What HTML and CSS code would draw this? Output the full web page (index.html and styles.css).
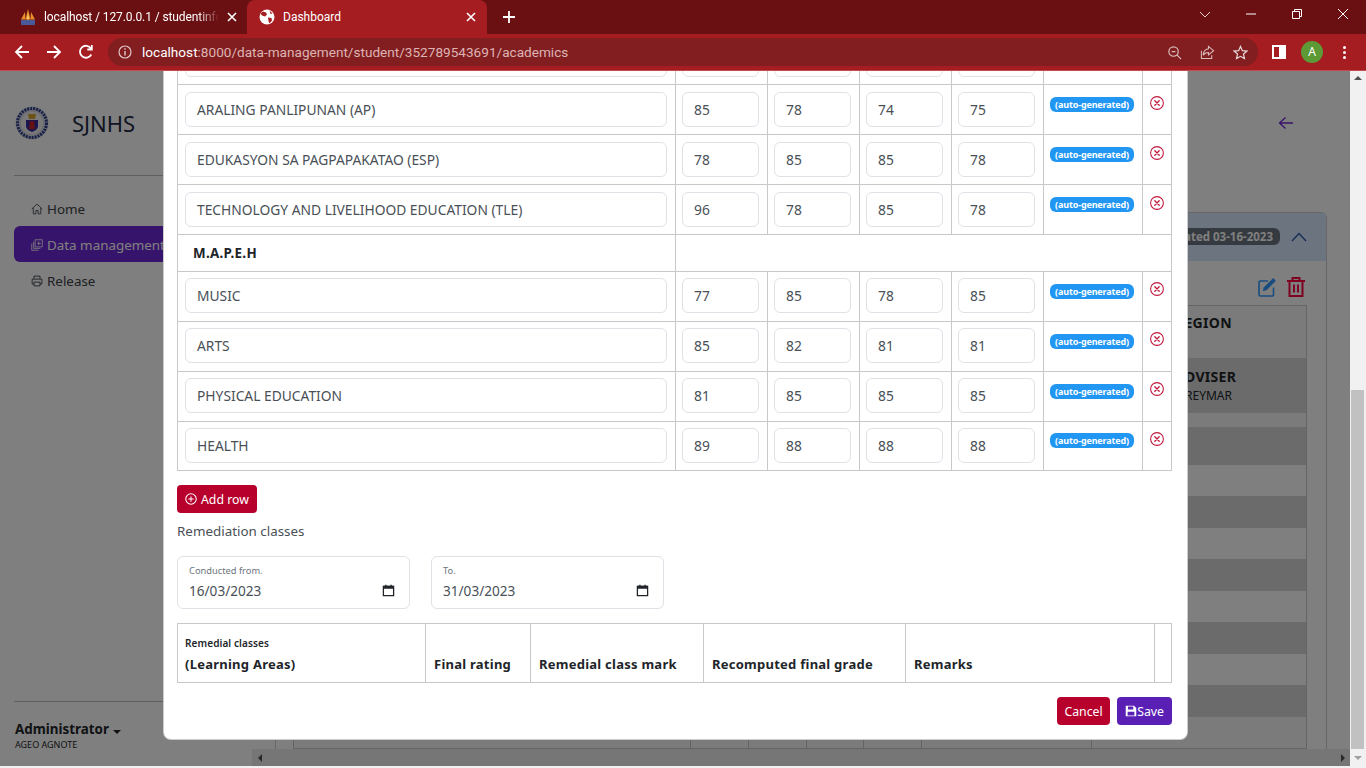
FILE: index.html
```html
<!DOCTYPE html>
<html lang="en">

<head>
    <meta charset="UTF-8" />
    <title>Dashboard</title>
    <link rel="stylesheet" href="styles.css">
</head>

<body>
    <svg class="icon-defs" width="0" height="0">
        <symbol id="i-x" viewBox="0 0 16 16">
            <circle cx="8" cy="8" r="7.3" fill="none" stroke="currentColor" stroke-width="1.2" />
            <path d="M5.5 5.5l5 5m0-5l-5 5" fill="none" stroke="currentColor" stroke-width="1.5" stroke-linecap="round" />
        </symbol>
        <symbol id="i-close" viewBox="0 0 10 10">
            <path d="M1 1l8 8m0-8l-8 8" fill="none" stroke="currentColor" stroke-width="1.6" />
        </symbol>
        <symbol id="i-cal" viewBox="0 0 14 14">
            <path d="M1.5 2.5h11v10h-11z" fill="none" stroke="currentColor" stroke-width="1.4" />
            <path d="M1.5 2h11v3h-11zM3.5 .8h1.4v2h-1.4zM9.1 .8h1.4v2h-1.4z" fill="currentColor" />
        </symbol>
    </svg>

    <!-- browser -->
    <div class="tabstrip">
        <div class="tab">
            <svg class="favicon" viewBox="0 0 16 16">
                <path d="M1 10.500L5 3l.5 7.500zM5.500 10.500L8 0l2.500 10.500zM10.500 10.500L11 3l4 7.500z" fill="#e8902a" />
                <path d="M7 10.500L8 4l1 6.500z" fill="#f7d774" />
                <rect x="1" y="11" width="14" height="5" fill="#4a5a98" />
            </svg>
            <span class="tab-title tab-title-fade">localhost / 127.0.0.1 / studentinfo</span>
            <svg class="tab-close"><use href="#i-close" /></svg>
        </div>
        <div class="tab tab-active">
            <svg class="favicon" viewBox="0 0 16 16">
                <circle cx="8" cy="8" r="7.5" fill="#fff" />
                <path d="M4 2.500l3 1 1 2-2 2-3-1-1.500-2zM9 8.500l3.500 .5 .5 2.500-2.500 3-1-2.500zM10.500 1.500l3 3-2 .5z" fill="#a51d20" />
            </svg>
            <span class="tab-title">Dashboard</span>
            <svg class="tab-close"><use href="#i-close" /></svg>
        </div>
        <svg class="new-tab" viewBox="0 0 12 12"><path d="M6 0v12M0 6h12" stroke="#fff" stroke-width="1.8" /></svg>
        <div class="win-controls">
            <svg viewBox="0 0 12 12"><path d="M1 4l5 5 5-5" fill="none" stroke="#e8d0d0" /></svg>
            <svg viewBox="0 0 12 12"><path d="M1 6h10" stroke="#fff" /></svg>
            <svg viewBox="0 0 12 12"><path d="M1.500 3.500h7v7h-7zM3.500 3.500v-2h7v7h-2" fill="none" stroke="#fff" /></svg>
            <svg viewBox="0 0 12 12"><path d="M1 1l10 10m0-10l-10 10" stroke="#fff" /></svg>
        </div>
    </div>

    <div class="toolbar">
        <svg class="nav-icon" viewBox="0 0 16 16"><path d="M15 8H2m6-6L2 8l6 6" fill="none" stroke="#fff" stroke-width="1.8" /></svg>
        <svg class="nav-icon" viewBox="0 0 16 16"><path d="M1 8h13M8 2l6 6-6 6" fill="none" stroke="#fff" stroke-width="1.8" /></svg>
        <svg class="nav-icon" viewBox="0 0 16 16"><path d="M13.300 10.500A6 6 0 1 1 13 4.500M13.800 1v4.500H9.300" fill="none" stroke="#fff" stroke-width="1.800" /></svg>
        <div class="omnibox">
            <svg class="omni-info" viewBox="0 0 14 14">
                <circle cx="7" cy="7" r="6" fill="none" stroke="#e0c8c8" stroke-width="1.2" />
                <path d="M7 6v4.500M7 3.300v1.500" stroke="#e0c8c8" stroke-width="1.400" />
            </svg>
            <span class="url"><b>localhost</b>:8000/data-management/student/352789543691/academics</span>
            <div class="omni-actions">
                <svg viewBox="0 0 16 16"><circle cx="7" cy="7" r="5" fill="none" stroke="#d8bcbc" stroke-width="1.300" /><path d="M5 7h4M10.500 10.500L15 15" stroke="#d8bcbc" stroke-width="1.300" /></svg>
                <svg viewBox="0 0 16 16"><path d="M9 1.500l5.500 4.500L9 10.500V8C6 8 4.500 9 3.500 11 3.500 7 5.500 4.500 9 4zM1.500 6v8.500h11V11" fill="none" stroke="#d8bcbc" stroke-width="1.100" /></svg>
                <svg viewBox="0 0 16 16"><path d="M8 1.500l2 4.500 4.800 .5-3.600 3.200 1 4.800L8 12.100 3.800 14.500l1-4.800L1.200 6.500 6 6z" fill="none" stroke="#e8d8d8" stroke-width="1.300" /></svg>
            </div>
        </div>
        <svg class="panel-icon" viewBox="0 0 14 14"><rect width="14" height="14" fill="#fff" /><rect x="2" y="2" width="5" height="10" fill="#a51d20" /></svg>
        <div class="avatar">A</div>
        <div class="kebab"><i></i><i></i><i></i></div>
    </div>

    <!-- page behind the modal -->
    <div class="page">
        <aside class="sidebar">
            <div class="brand">
                <svg class="seal" viewBox="0 0 34 36">
                    <circle cx="17" cy="18" r="16.500" fill="#d8d8e4" />
                    <circle cx="17" cy="18" r="14.500" fill="none" stroke="#2b3f8c" stroke-width="3" stroke-dasharray="2 1" />
                    <circle cx="17" cy="18" r="11" fill="#f2f2f2" />
                    <path d="M11 15h12v6c0 3-3 5-6 6-3-1-6-3-6-6z" fill="#3a2a9a" />
                    <path d="M13 9h8l-1 5h-6z" fill="#d9a528" />
                    <path d="M15 16h4l1 8h-6z" fill="#c8202a" />
                </svg>
                <span class="brand-name">SJNHS</span>
            </div>
            <nav class="side-nav">
                <a class="nav-link">
                    <svg viewBox="0 0 16 16"><path d="M1 8l7-6.500L15 8M3 6.500V14.500h3.500V10h3v4.500H13V6.500" fill="none" stroke="currentColor" stroke-width="1.100" /></svg>
                    Home
                </a>
                <a class="nav-link nav-active">
                    <svg viewBox="0 0 16 16"><path d="M5.500 1h9.500v9.500H5.500zM8 5.800h5M10.300 3.300v5" fill="none" stroke="currentColor" stroke-width="1.100" /><path d="M3.500 3.500v9h9M1 6v9h9" fill="none" stroke="currentColor" stroke-width="1.100" /></svg>
                    Data management
                </a>
                <a class="nav-link">
                    <svg viewBox="0 0 16 16"><path d="M4 5V1.500h8V5M4 12H1.500V5.500h13V12H12M4 9.500h8v5H4z" fill="none" stroke="currentColor" stroke-width="1.200" /></svg>
                    Release
                </a>
            </nav>
            <div class="side-user">
                <div class="user-name">Administrator <span class="caret"></span></div>
                <div class="user-sub">AGEO AGNOTE</div>
            </div>
        </aside>

        <main class="main">
            <div class="main-scroll">
                <div class="topbar">
                    <svg class="back" viewBox="0 0 16 16"><path d="M15 8H1.500m6-5.500L1.500 8l6 5.500" fill="none" stroke="#6f28d6" stroke-width="1.300" /></svg>
                </div>
                <div class="card">
                    <div class="card-head">
                        <span class="pill">Created 03-16-2023</span>
                        <svg class="chev" viewBox="0 0 16 10"><path d="M1 9l7-7.500L15 9" fill="none" stroke="#2a5aa8" stroke-width="1.300" /></svg>
                    </div>
                    <div class="card-body">
                        <div class="card-tools">
                            <svg viewBox="0 0 18 20"><path d="M15.500 10.500V17.500a1.500 1.500 0 0 1-1.500 1.500H2.500A1.500 1.500 0 0 1 1 17.500V5.500A1.500 1.500 0 0 1 2.500 4h7.500" fill="none" stroke="#3399ff" stroke-width="1.600" /><path d="M15.200 1l2.700 2.700L8.500 13.200l-3.700 .9 .9-3.700z" fill="#3399ff" /></svg>
                            <svg viewBox="0 0 18 20"><path d="M0 4h18M5.500 4V1h7v3M2.500 4v15h13V4M7 7.500v8M11 7.500v8" fill="none" stroke="#ff0040" stroke-width="2" /></svg>
                        </div>
                        <table class="bg-table">
                            <colgroup>
                                <col class="bg-c1"><col class="bg-c2"><col class="bg-c3"><col class="bg-c3"><col class="bg-c3"><col class="bg-c4"><col>
                            </colgroup>
                            <tr class="bg-r1"><td></td><td></td><td></td><td></td><td></td><td></td><td class="bg-last"><b>REGION</b></td></tr>
                            <tr class="bg-r2 bg-dark"><td></td><td></td><td></td><td></td><td></td><td></td><td class="bg-last"><b>ADVISER</b><small>REYMAR</small></td></tr>
                            <tr class="bg-r3"><td colspan="7"></td></tr>
                            <tr class="bg-r4 bg-dark"><td colspan="7"></td></tr>
                            <tr class="bg-r5"><td colspan="7"></td></tr>
                            <tr class="bg-r5 bg-dark"><td colspan="7"></td></tr>
                            <tr class="bg-r5"><td colspan="7"></td></tr>
                            <tr class="bg-r5 bg-dark"><td colspan="7"></td></tr>
                            <tr class="bg-r5"><td colspan="7"></td></tr>
                            <tr class="bg-r5 bg-dark"><td colspan="7"></td></tr>
                            <tr class="bg-r5"><td colspan="7"></td></tr>
                            <tr class="bg-r5 bg-dark"><td colspan="7"></td></tr>
                            <tr class="bg-r6"><td></td><td></td><td></td><td></td><td></td><td></td><td></td></tr>
                        </table>
                    </div>
                </div>
            </div>
            <div class="hscroll"></div>
        </main>

        <div class="vscroll"><div class="vthumb"></div></div>

        <div class="backdrop">
            <div class="modal">
                <table class="grades">
                    <colgroup>
                        <col class="c-subject"><col class="c-grade"><col class="c-grade"><col class="c-grade"><col class="c-grade"><col class="c-badge"><col class="c-del">
                    </colgroup>
                    <tr class="grade-row">
                        <td><div class="field"></div></td>
                        <td><div class="field"></div></td><td><div class="field"></div></td><td><div class="field"></div></td><td><div class="field"></div></td>
                        <td></td><td></td>
                    </tr>
                    <tr class="grade-row">
                        <td><div class="field">ARALING PANLIPUNAN (AP)</div></td>
                        <td><div class="field">85</div></td><td><div class="field">78</div></td><td><div class="field">74</div></td><td><div class="field">75</div></td>
                        <td><span class="badge">(auto-generated)</span></td>
                        <td><svg class="del"><use href="#i-x" /></svg></td>
                    </tr>
                    <tr class="grade-row">
                        <td><div class="field">EDUKASYON SA PAGPAPAKATAO (ESP)</div></td>
                        <td><div class="field">78</div></td><td><div class="field">85</div></td><td><div class="field">85</div></td><td><div class="field">78</div></td>
                        <td><span class="badge">(auto-generated)</span></td>
                        <td><svg class="del"><use href="#i-x" /></svg></td>
                    </tr>
                    <tr class="grade-row">
                        <td><div class="field">TECHNOLOGY AND LIVELIHOOD EDUCATION (TLE)</div></td>
                        <td><div class="field">96</div></td><td><div class="field">78</div></td><td><div class="field">85</div></td><td><div class="field">78</div></td>
                        <td><span class="badge">(auto-generated)</span></td>
                        <td><svg class="del"><use href="#i-x" /></svg></td>
                    </tr>
                    <tr class="group-row">
                        <td class="group-name">M.A.P.E.H</td>
                        <td colspan="6"></td>
                    </tr>
                    <tr class="grade-row grade-row-sub">
                        <td><div class="field">MUSIC</div></td>
                        <td><div class="field">77</div></td><td><div class="field">85</div></td><td><div class="field">78</div></td><td><div class="field">85</div></td>
                        <td><span class="badge">(auto-generated)</span></td>
                        <td><svg class="del"><use href="#i-x" /></svg></td>
                    </tr>
                    <tr class="grade-row grade-row-sub">
                        <td><div class="field">ARTS</div></td>
                        <td><div class="field">85</div></td><td><div class="field">82</div></td><td><div class="field">81</div></td><td><div class="field">81</div></td>
                        <td><span class="badge">(auto-generated)</span></td>
                        <td><svg class="del"><use href="#i-x" /></svg></td>
                    </tr>
                    <tr class="grade-row grade-row-sub">
                        <td><div class="field">PHYSICAL EDUCATION</div></td>
                        <td><div class="field">81</div></td><td><div class="field">85</div></td><td><div class="field">85</div></td><td><div class="field">85</div></td>
                        <td><span class="badge">(auto-generated)</span></td>
                        <td><svg class="del"><use href="#i-x" /></svg></td>
                    </tr>
                    <tr class="grade-row grade-row-sub grade-row-last">
                        <td><div class="field">HEALTH</div></td>
                        <td><div class="field">89</div></td><td><div class="field">88</div></td><td><div class="field">88</div></td><td><div class="field">88</div></td>
                        <td><span class="badge">(auto-generated)</span></td>
                        <td><svg class="del"><use href="#i-x" /></svg></td>
                    </tr>
                </table>

                <button class="btn btn-red btn-add">
                    <svg viewBox="0 0 16 16"><circle cx="8" cy="8" r="7" fill="none" stroke="#fff" stroke-width="1.400" /><path d="M8 4.500v7M4.500 8h7" stroke="#fff" stroke-width="1.400" /></svg>
                    Add row
                </button>

                <div class="section-label">Remediation classes</div>

                <div class="date-row">
                    <div class="date-field">
                        <label>Conducted from.</label>
                        <div class="date-value">16/03/2023<svg><use href="#i-cal" /></svg></div>
                    </div>
                    <div class="date-field">
                        <label>To.</label>
                        <div class="date-value">31/03/2023<svg><use href="#i-cal" /></svg></div>
                    </div>
                </div>

                <table class="remedial">
                    <colgroup>
                        <col class="r-area"><col class="r-rating"><col class="r-mark"><col class="r-final"><col class="r-remarks"><col>
                    </colgroup>
                    <tr>
                        <th><small>Remedial classes</small>(Learning Areas)</th>
                        <th>Final rating</th>
                        <th>Remedial class mark</th>
                        <th>Recomputed final grade</th>
                        <th>Remarks</th>
                        <th></th>
                    </tr>
                </table>

                <div class="modal-footer">
                    <button class="btn btn-red btn-cancel">Cancel</button>
                    <button class="btn btn-purple">
                        <svg viewBox="0 0 16 16"><path d="M1 1h11l3 3v11H1z" fill="#fff" /><rect x="4" y="2" width="7" height="4" fill="#5a20b5" /><rect x="3.500" y="9" width="9" height="5" fill="#5a20b5" /></svg>Save
                    </button>
                </div>
            </div>
        </div>
    </div>
</body>

</html>
```

FILE: styles.css
```css
* {
    box-sizing: border-box;
}

html,
body {
    margin: 0;
    padding: 0;
    height: 768px;
    overflow: hidden;
}

body {
    font-family: "Noto Sans", "Open Sans", sans-serif;
    font-size: 14px;
    color: #212529;
    background-color: #f1f1f1;
}

.icon-defs {
    position: absolute;
}

/* browser */
.tabstrip {
    display: flex;
    align-items: flex-end;
    height: 34px;
    background-color: #6b1012;
    color: white;
    font-family: Roboto, "Liberation Sans", sans-serif;
    font-size: 12px;
}

.tab {
    display: flex;
    align-items: center;
    width: 247px;
    height: 34px;
    padding: 0 10px 0 20px;
}

.tab-active {
    width: 240px;
    padding: 0 11px 0 12px;
    background-color: #a51d20;
    border-radius: 8px 8px 0 0;
}

.favicon {
    flex: none;
    width: 16px;
    height: 16px;
    margin-right: 8px;
}

.tab-title {
    flex: 1;
    overflow: hidden;
    white-space: nowrap;
}

.tab-title-fade {
    letter-spacing: -.1px;
    -webkit-mask-image: linear-gradient(to right, black 88%, transparent);
    mask-image: linear-gradient(to right, black 88%, transparent);
}

.tab-close {
    flex: none;
    width: 10px;
    height: 10px;
    margin-left: 8px;
    color: white;
}

.new-tab {
    width: 12px;
    height: 12px;
    margin: 0 0 11px 16px;
}

.win-controls {
    display: flex;
    gap: 34px;
    margin: 0 17px 14px auto;
}

.win-controls svg {
    width: 12px;
    height: 12px;
}

.toolbar {
    display: flex;
    align-items: center;
    height: 37px;
    padding: 0 14px 0 14px;
    background-color: #a51d20;
    border-bottom: 1px solid #c44a4c;
}

.nav-icon {
    width: 16px;
    height: 16px;
    margin-right: 16px;
}

.omnibox {
    display: flex;
    align-items: center;
    width: 1150px;
    height: 28px;
    margin-left: -2px;
    padding: 0 10px;
    border-radius: 14px;
    background-color: #821e20;
    font-family: Roboto, "Liberation Sans", sans-serif;
    font-size: 13.6px;
    color: #dcb4b4;
}

.omni-info {
    width: 14px;
    height: 14px;
    margin-right: 10px;
}

.url b {
    font-weight: 400;
    color: white;
}

.omni-actions {
    display: flex;
    gap: 18px;
    margin-left: auto;
}

.omni-actions svg {
    width: 15px;
    height: 15px;
}

.panel-icon {
    width: 14px;
    height: 14px;
    margin-left: 14px;
}

.avatar {
    width: 22px;
    height: 22px;
    margin-left: 15px;
    border-radius: 50%;
    background-color: #5d9a36;
    color: white;
    font-size: 12px;
    line-height: 22px;
    text-align: center;
}

.kebab {
    display: flex;
    flex-direction: column;
    gap: 2px;
    margin-left: 20px;
}

.kebab i {
    width: 3px;
    height: 3px;
    border-radius: 50%;
    background-color: white;
}

/* page */
.page {
    position: relative;
    display: flex;
    height: 695px;
    background-color: white;
}

.sidebar {
    display: flex;
    flex: none;
    flex-direction: column;
    width: 252px;
    padding: 0 14px 0 14px;
}

.brand {
    display: flex;
    align-items: center;
    height: 105px;
    padding-top: 0;
    border-bottom: 1px solid #bdbdbd;
}

.seal {
    width: 34px;
    height: 36px;
    margin: 0 23px 0 1px;
}

.brand-name {
    font-size: 22px;
    font-weight: 400;
    color: #1f2a44;
}

.side-nav {
    display: flex;
    flex-direction: column;
    margin-top: 14px;
}

.nav-link {
    display: flex;
    align-items: center;
    gap: 4px;
    height: 36px;
    padding: 2px 0 0 17px;
    border-radius: 6px;
    color: #3a3f46;
    font-size: 13.4px;
}

.nav-link svg {
    width: 12px;
    height: 12px;
}

.nav-active {
    background-color: #6f28d6;
    color: white;
}

.side-user {
    margin-top: auto;
    height: 65px;
    padding: 18px 0 0 1px;
    border-top: 1px solid #bdbdbd;
}

.user-name {
    font-weight: 700;
    font-size: 13.4px;
    line-height: 18px;
}

.caret {
    display: inline-block;
    margin-left: 1px;
    border-top: 4px solid #212529;
    border-left: 4px solid transparent;
    border-right: 4px solid transparent;
}

.user-sub {
    font-size: 9px;
    line-height: 14px;
}

.main {
    display: flex;
    flex: 1;
    flex-direction: column;
    min-width: 0;
}

.main-scroll {
    flex: 1;
    overflow: hidden;
    padding: 0 23px;
}

.topbar {
    display: flex;
    justify-content: flex-end;
    height: 141px;
    padding: 44px 33px 0 0;
}

.back {
    width: 16px;
    height: 16px;
}

.card {
    border: 1px solid #cfcfcf;
    border-radius: 6px 6px 0 0;
}

.card-head {
    display: flex;
    align-items: center;
    justify-content: flex-end;
    gap: 11px;
    height: 48px;
    padding-right: 19px;
    background-color: #d6e8ff;
}

.pill {
    margin-bottom: 1px;
    padding: 1px 7px;
    border-radius: 6px;
    background-color: #6b7280;
    color: white;
    font-size: 11.5px;
    font-weight: 700;
}

.chev {
    width: 16px;
    height: 10px;
}

.card-body {
    padding: 16px 19px 0 17px;
}

.card-tools {
    display: flex;
    justify-content: flex-end;
    gap: 11px;
    height: 28px;
    padding-right: 2px;
}

.card-tools svg {
    width: 18px;
    height: 20px;
}

.bg-table {
    width: 100%;
    border-collapse: collapse;
    table-layout: fixed;
    border: 1px solid #c8c8c8;
}

.bg-c1 { width: 397px; }
.bg-c2 { width: 58px; }
.bg-c3 { width: 57.500px; }
.bg-c4 { width: 170px; }

.bg-table td {
    padding: 0;
    vertical-align: top;
}

.bg-dark {
    background-color: #d6d6d6;
}

.bg-r1 { height: 52px; background-color: #f6f6f6; }
.bg-r2 { height: 55px; }
.bg-r3 { height: 14px; background-color: #f6f6f6; }
.bg-r4 { height: 38px; }
.bg-r5 { height: 31.500px; }
.bg-r6 { height: 32px; background-color: #f6f6f6; }

.bg-r6 td {
    border-right: 1px solid #c8c8c8;
}

.bg-last {
    padding: 7px 0 0 84px !important;
    white-space: nowrap;
    letter-spacing: .3px;
}

.bg-r2 .bg-last {
    padding-top: 9px !important;
}

.bg-last small {
    display: block;
    margin: 1px 0 0 10px;
    font-size: 12px;
    letter-spacing: 0;
}

.hscroll {
    display: flex;
    flex: none;
    align-items: center;
    justify-content: space-between;
    height: 17px;
    padding: 0 5px 0 6px;
    background-color: #ececec;
}

.hscroll::before {
    content: "";
    border-right: 4px solid #505050;
    border-top: 4px solid transparent;
    border-bottom: 4px solid transparent;
}

.hscroll::after {
    content: "";
    border-left: 4px solid #505050;
    border-top: 4px solid transparent;
    border-bottom: 4px solid transparent;
}

.vscroll {
    display: flex;
    flex: none;
    flex-direction: column;
    width: 16px;
    padding: 5px 2px 5px 1px;
    background-color: #f1f1f1;
}

.vscroll::before {
    content: "";
    align-self: center;
    border-bottom: 4px solid #505050;
    border-left: 4px solid transparent;
    border-right: 4px solid transparent;
}

.vscroll::after {
    content: "";
    align-self: center;
    margin-top: 7px;
    border-top: 4px solid #a0a0a0;
    border-left: 4px solid transparent;
    border-right: 4px solid transparent;
}

.vthumb {
    height: 359px;
    margin-top: 310px;
    background-color: #c1c1c1;
}

.backdrop {
    position: absolute;
    top: 0;
    left: 0;
    right: 16px;
    bottom: 0;
    background-color: rgba(0, 0, 0, .5);
}

/* modal */
.modal {
    position: absolute;
    top: 0;
    left: 163px;
    display: flex;
    flex-direction: column;
    justify-content: flex-end;
    width: 1025px;
    height: 669px;
    overflow: hidden;
    padding: 0 15px 14px 13px;
    background-color: white;
    border: 1px solid rgba(0, 0, 0, .2);
    border-top: none;
    border-radius: 0 0 8px 8px;
}

.grades,
.remedial {
    flex: none;
    width: 995px;
    border-collapse: collapse;
    table-layout: fixed;
}

.c-subject { width: 498px; }
.c-grade { width: 92px; }
.c-badge { width: 99px; }

.grades td {
    padding: 7px 8px 7px 6px;
    border: 1px solid #c8c8c8;
    vertical-align: top;
}

.grades td:first-child {
    padding-left: 7px;
    padding-right: 8px;
}

.grade-row {
    height: 50px;
}

.grades .grade-row-sub td {
    padding-top: 6px;
    padding-bottom: 8px;
}

.grade-row-sub .badge {
    margin-top: 6px;
}

.grade-row-last {
    height: 49px;
}

.grades .grade-row-last td {
    padding-bottom: 7px;
}

.grade-row-last .badge {
    margin-top: 5px;
}

.group-row {
    height: 37px;
}

.grades td.group-name {
    padding: 0 0 0 15px;
    vertical-align: middle;
    font-size: 13.4px;
    font-weight: 700;
    letter-spacing: .3px;
}

.field {
    height: 35px;
    padding: 0 11px;
    border: 1px solid #dee2e6;
    border-radius: 6px;
    color: #495057;
    font-size: 13.8px;
    line-height: 33px;
    white-space: nowrap;
    overflow: hidden;
}

.badge {
    display: block;
    margin-top: 5px;
    height: 15px;
    border-radius: 6px;
    background-color: #2196f3;
    color: white;
    font-size: 9px;
    font-weight: 700;
    letter-spacing: -.15px;
    line-height: 15px;
    text-align: center;
    white-space: nowrap;
}

.del {
    display: block;
    width: 14px;
    height: 14px;
    margin: 4px 0 0 1px;
    color: #c0163c;
}

.btn {
    display: inline-flex;
    align-items: center;
    height: 28px;
    padding: 0 8px;
    border: none;
    border-radius: 4px;
    color: white;
    font-family: inherit;
    font-size: 12.3px;
}

.btn svg {
    width: 12px;
    height: 12px;
}

.btn-red {
    background-color: #b8002c;
}

.btn-purple {
    background-color: #5a20b5;
}

.btn-cancel {
    padding: 0 7.500px;
}

.btn-add {
    flex: none;
    align-self: flex-start;
    gap: 4px;
    margin-top: 14px;
}

.section-label {
    margin-top: 9px;
    line-height: 18px;
    color: #495057;
    font-size: 13.4px;
}

.date-row {
    display: flex;
    gap: 21px;
    margin-top: 16px;
}

.date-field {
    width: 233px;
    height: 53px;
    padding: 7px 11px;
    border: 1px solid #dee2e6;
    border-radius: 6px;
}

.date-field label {
    display: block;
    color: #6c757d;
    font-size: 9.3px;
    line-height: 13px;
}

.date-value {
    display: flex;
    align-items: center;
    justify-content: space-between;
    margin-top: 5px;
    color: #495057;
    font-size: 13.6px;
    line-height: 18px;
}

.date-value svg {
    width: 13px;
    height: 13px;
    margin: -2px 3px 0 0;
    color: #212529;
}

.remedial {
    margin-top: 14px;
}

.r-area { width: 248px; }
.r-rating { width: 105px; }
.r-mark { width: 173px; }
.r-final { width: 202px; }
.r-remarks { width: 249px; }

.remedial th {
    height: 59px;
    padding: 0 8px 9px;
    border: 1px solid #c8c8c8;
    font-size: 13px;
    font-weight: 700;
    letter-spacing: .25px;
    line-height: 18px;
    text-align: left;
    vertical-align: bottom;
    white-space: nowrap;
}

.remedial th:first-child {
    padding-left: 7px;
}

.remedial small {
    display: block;
    margin-bottom: 3px;
    font-size: 10px;
    font-weight: 600;
    letter-spacing: .1px;
}

.modal-footer {
    display: flex;
    justify-content: flex-end;
    gap: 7px;
    margin-top: 14px;
}
```
